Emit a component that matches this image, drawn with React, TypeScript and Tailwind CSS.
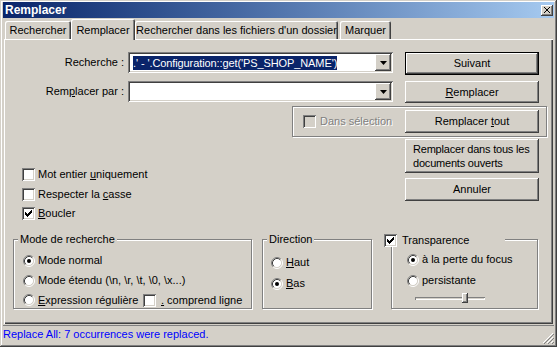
import React from 'react';

const raised = 'shadow-[inset_-1px_-1px_#404040,inset_1px_1px_#ffffff,inset_-2px_-2px_#808080]';
const sunken = 'shadow-[inset_1px_1px_#808080,inset_-1px_-1px_#ffffff,inset_2px_2px_#404040,inset_-2px_-2px_#d4d0c8]';

function U({ children }: { children: React.ReactNode }) {
  return <span className="underline decoration-1 underline-offset-[1px]">{children}</span>;
}

function Btn({ children, h, def, className = '' }: { children: React.ReactNode; h: string; def?: boolean; className?: string }) {
  return (
    <div
      className={`w-[134px] ${h} shrink-0 flex items-center justify-center bg-[#d4d0c8] ${raised} ${def ? 'border border-black' : ''} ${className}`}
    >
      {children}
    </div>
  );
}

function Check({ checked, disabled }: { checked?: boolean; disabled?: boolean }) {
  return (
    <span className={`w-[13px] h-[13px] shrink-0 block ${disabled ? 'bg-[#d4d0c8]' : 'bg-white'} ${sunken}`}>
      {checked && (
        <svg width="13" height="13" viewBox="0 0 13 13" shapeRendering="crispEdges">
          <path
            fill="#000"
            d="M9 3h1v1h-1z M8 4h2v1h-2z M3 5h1v1h-1z M7 5h3v1h-3z M3 6h2v1h-2z M6 6h3v1h-3z M3 7h5v1h-5z M4 8h3v1h-3z M5 9h1v1h-1z"
          />
        </svg>
      )}
    </span>
  );
}

function Radio({ on }: { on?: boolean }) {
  return (
    <svg width="12" height="12" viewBox="0 0 12 12" className="shrink-0">
      <circle cx="6" cy="6" r="4.5" fill="#fff" />
      <path d="M2.11 9.89A5.5 5.5 0 0 1 9.89 2.11" stroke="#808080" fill="none" />
      <path d="M9.89 2.11A5.5 5.5 0 0 1 2.11 9.89" stroke="#ffffff" fill="none" />
      <path d="M2.82 9.18A4.5 4.5 0 0 1 9.18 2.82" stroke="#404040" fill="none" />
      <path d="M9.18 2.82A4.5 4.5 0 0 1 2.82 9.18" stroke="#d4d0c8" fill="none" />
      {on && <circle cx="6" cy="6" r="2" fill="#000" />}
    </svg>
  );
}

function Combo({ children }: { children?: React.ReactNode }) {
  return (
    <div className={`w-[265px] h-[21px] ml-[4px] shrink-0 bg-white ${sunken} flex items-stretch p-[2px]`}>
      <div className="flex-1 flex items-center pl-[3px] overflow-hidden whitespace-nowrap">{children}</div>
      <div className={`w-[16px] bg-[#d4d0c8] ${raised} flex items-center justify-center`}>
        <svg width="7" height="4" viewBox="0 0 7 4">
          <polygon points="0,0 7,0 3.5,4" fill="#000" />
        </svg>
      </div>
    </div>
  );
}

function Group({ legend, className, children }: { legend: React.ReactNode; className: string; children: React.ReactNode }) {
  return (
    <div className={`relative shrink-0 border border-[#808080] shadow-[inset_1px_1px_#ffffff,1px_1px_#ffffff] ${className}`}>
      {legend}
      {children}
    </div>
  );
}

function Legend({ children }: { children: React.ReactNode }) {
  return (
    <span className="absolute top-[-7px] left-[4px] px-[2px] bg-[#d4d0c8] leading-[13px]">{children}</span>
  );
}

function Row({ children, className = '' }: { children: React.ReactNode; className?: string }) {
  return <div className={`flex items-center h-[13px] gap-[3px] whitespace-nowrap ${className}`}>{children}</div>;
}

export default function App() {
  return (
    <div className="w-[557px] h-[347px] overflow-hidden bg-[#d4d0c8] text-[11px] text-black font-['Liberation_Sans',Arial,sans-serif] flex flex-col p-[3px] pt-[2px] relative shadow-[inset_-1px_-1px_#404040,inset_1px_1px_#d4d0c8,inset_-2px_-2px_#808080,inset_2px_2px_#ffffff]">
      {/* Title bar */}
      <div className="h-[16px] shrink-0 bg-linear-to-r from-[#0a246a] to-[#a6caf0] flex items-center justify-between pl-[2px] pr-[1px]">
        <span className="text-white font-bold text-[12px] leading-[16px]">Remplacer</span>
        <div className={`w-[12px] h-[11px] bg-[#d4d0c8] ${raised} flex items-center justify-center`}>
          <svg width="6" height="6" viewBox="0 0 6 6" shapeRendering="crispEdges">
            <path d="M0 0L6 6M6 0L0 6" stroke="#000" strokeWidth="1.3" />
          </svg>
        </div>
      </div>

      {/* Tabs */}
      <div className="h-[21px] shrink-0 flex items-end pl-[2px]">
        <div className="w-[66px] h-[18px] flex items-center justify-center rounded-t-[2px] shadow-[inset_1px_1px_#ffffff,inset_-1px_0_#404040,inset_-2px_0_#808080]">
          Rechercher
        </div>
        <div className="relative z-10 w-[64px] h-[21px] -mb-[1px] bg-[#d4d0c8] flex items-start justify-center pt-[3px] rounded-t-[2px] shadow-[inset_1px_1px_#ffffff,inset_-1px_0_#404040,inset_-2px_0_#808080]">
          Remplacer
        </div>
        <div className="w-[203px] h-[18px] flex items-center justify-center rounded-t-[2px] shadow-[inset_1px_1px_#ffffff,inset_-1px_0_#404040,inset_-2px_0_#808080]">
          Rechercher dans les fichiers d'un dossier
        </div>
        <div className="w-[51px] h-[18px] ml-[2px] flex items-center justify-center rounded-t-[2px] shadow-[inset_1px_1px_#ffffff,inset_-1px_0_#404040,inset_-2px_0_#808080]">
          Marquer
        </div>
      </div>

      {/* Tab panel */}
      <div className="h-[285px] shrink-0 mx-[1px] flex flex-col shadow-[inset_1px_1px_#ffffff,inset_-1px_-1px_#404040,inset_-2px_-2px_#808080]">
        {/* Recherche */}
        <div className="flex items-start mt-[13px]">
          <div className="w-[120px] h-[21px] leading-[21px] text-right shrink-0">Recherche :</div>
          <Combo>
            <span className="bg-[#0a246a] text-white leading-[14px] tracking-[-0.1px]">.' - '.Configuration::get('PS_SHOP_NAME')</span>
          </Combo>
          <Btn h="h-[23px]" def className="ml-[12px]">
            Suivant
          </Btn>
        </div>

        {/* Remplacer par */}
        <div className="flex items-start mt-[6px]">
          <div className="w-[120px] h-[21px] leading-[21px] text-right shrink-0">
            Rem<U>p</U>lacer par :
          </div>
          <Combo />
          <Btn h="h-[22px]" className="ml-[12px]">
            <U>R</U>emplacer
          </Btn>
        </div>

        {/* Dans sélection */}
        <div className="flex mt-[3px]">
          <div className="ml-[288px] w-[255px] h-[31px] flex items-start border border-[#808080] shadow-[inset_1px_1px_#ffffff,1px_1px_#ffffff]">
            <div className="ml-[10px] mt-[8px] w-[102px] flex items-center h-[13px] gap-[4px] whitespace-nowrap">
              <Check disabled />
              <span className="text-[#808080] [text-shadow:1px_1px_0_#ffffff]">Dans sélection</span>
            </div>
            <Btn h="h-[23px]" className="mt-[3px]">
              Remplacer <span className="ml-[3px]"><U>t</U>out</span>
            </Btn>
          </div>
        </div>

        {/* Options + extra buttons */}
        <div className="flex mt-[2px]">
          <div className="w-[401px] shrink-0 pl-[18px] pt-[29px] flex flex-col">
            <Row>
              <Check />
              <span>
                Mot entier <U>u</U>niquement
              </span>
            </Row>
            <Row className="mt-[7px]">
              <Check />
              <span>
                Respecter la <U>c</U>asse
              </span>
            </Row>
            <Row className="mt-[6px]">
              <Check checked />
              <span>
                <U>B</U>oucler
              </span>
            </Row>
          </div>
          <div className="flex flex-col">
            <Btn h="h-[34px]" className="!justify-start pl-[8px] pr-[4px] leading-[14px] text-left tracking-[-0.2px]">
              <span>
                Remplacer dans tous les
                <br />
                documents ouverts
              </span>
            </Btn>
            <Btn h="h-[23px]" className="mt-[5px]">
              Annuler
            </Btn>
          </div>
        </div>

        {/* Group boxes */}
        <div className="flex mt-[19px]">
          <Group legend={<Legend>Mode de recherche</Legend>} className="ml-[9px] w-[239px] h-[70px]">
            <div className="pl-[9px] pt-[14px] flex flex-col gap-[7px]">
              <Row className="h-[12px]">
                <Radio on />
                <span>Mode normal</span>
              </Row>
              <Row className="h-[12px]">
                <Radio />
                <span>Mode étendu (\n, \r, \t, \0, \x...)</span>
              </Row>
              <div className="flex items-center h-[12px] whitespace-nowrap">
                <div className="w-[120px] flex items-center gap-[3px]">
                  <Radio />
                  <span>
                    <U>E</U>xpression régulière
                  </span>
                </div>
                <Check />
                <span className="ml-[5px] w-[84px] overflow-hidden">
                  <U>.</U> comprend ligne nouvelle
                </span>
              </div>
            </div>
          </Group>

          <Group legend={<Legend>Direction</Legend>} className="ml-[10px] w-[110px] h-[70px]">
            <div className="pl-[8px] pt-[16px] flex flex-col gap-[8px]">
              <Row className="h-[12px]">
                <Radio />
                <span>
                  <U>H</U>aut
                </span>
              </Row>
              <Row className="h-[12px]">
                <Radio on />
                <span>
                  <U>B</U>as
                </span>
              </Row>
            </div>
          </Group>

          <Group
            legend={
              <span className="absolute top-[-6px] left-[-8px] w-[121px] flex items-center gap-[5px] bg-[#d4d0c8] leading-[13px]">
                <Check checked />
                <span>Transparence</span>
              </span>
            }
            className="ml-[19px] w-[147px] h-[70px]"
          >
            <div className="pl-[15px] pt-[13px] flex flex-col">
              <Row className="h-[12px]">
                <Radio on />
                <span>à la perte du focus</span>
              </Row>
              <Row className="h-[12px] mt-[8px]">
                <Radio />
                <span>persistante</span>
              </Row>
              <div className="relative ml-[8px] mt-[6px] w-[70px] h-[10px] flex items-center">
                <div className="w-full h-[3px] shadow-[inset_1px_1px_#808080,inset_-1px_-1px_#ffffff] bg-[#d4d0c8]" />
                <div className={`absolute left-[47px] top-0 w-[6px] h-[10px] bg-[#d4d0c8] ${raised}`} />
              </div>
            </div>
          </Group>
        </div>
      </div>

      {/* Status bar */}
      <div className="h-[19px] shrink-0 mt-[1px] border-t border-[#808080] pt-[1px] leading-[14px] text-[#0000ff] whitespace-nowrap">
        Replace All: 7 occurrences were replaced.
      </div>

      {/* Resize grip */}
      <svg width="12" height="12" viewBox="0 0 12 12" className="absolute right-[3px] bottom-[3px]" shapeRendering="crispEdges">
        <path d="M11 1L1 11M11 5L5 11M11 9L9 11" stroke="#ffffff" />
        <path d="M12 2L2 12M12 6L6 12M12 10L10 12" stroke="#808080" />
      </svg>
    </div>
  );
}
